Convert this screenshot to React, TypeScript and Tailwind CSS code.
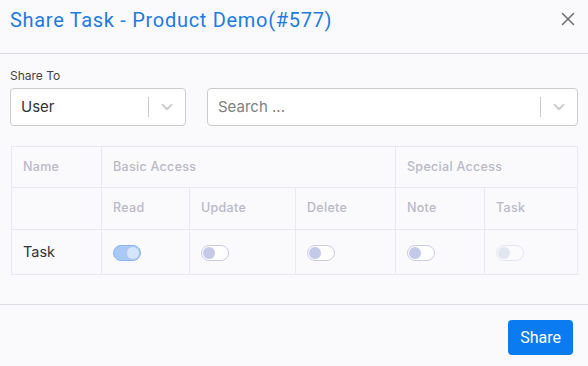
import { ChevronDown, X } from 'lucide-react'

type ToggleState = 'on' | 'off' | 'disabled'

function Toggle({ state }: { state: ToggleState }) {
  if (state === 'on') {
    return (
      <span className="inline-flex h-[16px] w-[28px] items-center justify-end rounded-full border border-[#8db4f0] bg-[#a9c9f7] pr-[1px]">
        <span className="h-[12px] w-[12px] rounded-full bg-[#d6e5fb]" />
      </span>
    )
  }
  return (
    <span
      className={
        state === 'off'
          ? 'inline-flex h-[16px] w-[28px] items-center rounded-full border border-[#c9cce3] bg-white pl-[1px]'
          : 'inline-flex h-[16px] w-[28px] items-center rounded-full border border-[#e6e7f0] bg-[#fbfbfd] pl-[1px]'
      }
    >
      <span className={state === 'off' ? 'h-[12px] w-[12px] rounded-full bg-[#c3c9e9]' : 'h-[12px] w-[12px] rounded-full bg-[#e3e5f0]'} />
    </span>
  )
}

function SelectBox({ value, placeholder, className }: { value?: string; placeholder?: string; className: string }) {
  return (
    <div className={`flex h-[38px] items-center rounded-[4px] border border-[#cccccc] bg-white ${className}`}>
      <span className={`flex-1 pl-[10px] text-[15px] ${value ? 'text-[#333]' : 'text-[#808080]'}`}>
        {value ?? placeholder}
      </span>
      <span className="h-[20px] w-px bg-[#cccccc]" />
      <span className="flex w-[36px] justify-center text-[#cccccc]">
        <ChevronDown className="h-[18px] w-[18px]" strokeWidth={2.5} />
      </span>
    </div>
  )
}

const cell = 'border border-[#e9e9f1] font-medium text-[12.5px] tracking-[0.3px] text-[#b9b9c6] text-left align-middle px-[11px]'
const td = 'border border-[#e9e9f1] px-[11px] pt-[2px]'

export default function App() {
  return (
    <div className="h-[366px] w-[588px] bg-[#fafafd] font-['Inter',sans-serif]">
      <div className="flex h-[54px] items-start justify-between border-b border-[#dcdce4] pl-[10px] pr-[9px] pt-[7px]">
        <h1 className="font-['Roboto',sans-serif] text-[20px] leading-[26px] tracking-[0.7px] text-[#1e7be0]">
          Share Task - Product Demo(#577)
        </h1>
        <X className="mt-[1px] h-[22px] w-[22px] text-[#6c6c6c]" strokeWidth={1.6} />
      </div>

      <div className="px-[10px] pt-[13px]">
        <p className="mb-[3px] text-[12px] text-[#444]">Share To</p>
        <div className="flex gap-[21px]">
          <SelectBox value="User" className="w-[176px]" />
          <SelectBox placeholder="Search ..." className="flex-1" />
        </div>

        <table className="mt-[20px] ml-px w-[567px] border-collapse">
          <thead>
            <tr className="h-[41px]">
              <th className={`${cell} w-[90px]`}>Name</th>
              <th colSpan={3} className={cell}>Basic Access</th>
              <th colSpan={2} className={cell}>Special Access</th>
            </tr>
            <tr className="h-[42px]">
              <th className={`${cell} w-[90px]`} />
              <th className={`${cell} w-[88px]`}>Read</th>
              <th className={`${cell} w-[106px]`}>Update</th>
              <th className={`${cell} w-[100px]`}>Delete</th>
              <th className={`${cell} w-[89px]`}>Note</th>
              <th className={cell}>Task</th>
            </tr>
          </thead>
          <tbody>
            <tr className="h-[45px]">
              <td className="border border-[#e9e9f1] px-[11px] text-[14.5px] text-[#333]">Task</td>
              <td className={td}><Toggle state="on" /></td>
              <td className={td}><Toggle state="off" /></td>
              <td className={td}><Toggle state="off" /></td>
              <td className={td}><Toggle state="off" /></td>
              <td className={td}><Toggle state="disabled" /></td>
            </tr>
          </tbody>
        </table>
      </div>

      <div className="mt-[29px] flex justify-end border-t border-[#dcdce4] pr-[15px] pt-[15px]">
        <button className="h-[35px] rounded-[4px] bg-[#0a7bf0] px-[12px] font-['Roboto',sans-serif] text-[16px] text-white">
          Share
        </button>
      </div>
    </div>
  )
}
